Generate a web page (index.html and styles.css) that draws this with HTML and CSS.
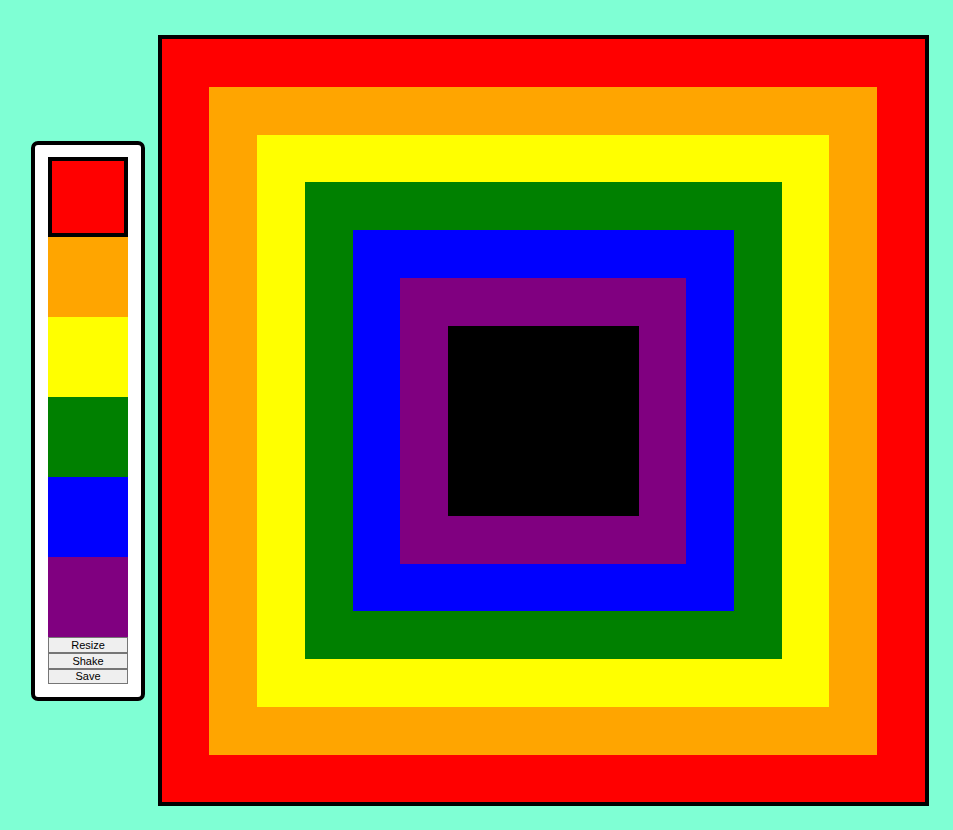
FILE: index.html
```html
<!DOCTYPE html>
<html>
<head>
<meta charset="utf-8">
<link rel="stylesheet" href="styles.css">
</head>
<body>
<div class="app">
  <div class="palette">
    <div class="swatch selected" style="background:#ff0000"></div>
    <div class="swatch" style="background:#ffa500"></div>
    <div class="swatch" style="background:#ffff00"></div>
    <div class="swatch" style="background:#008000"></div>
    <div class="swatch" style="background:#0000ff"></div>
    <div class="swatch" style="background:#800080"></div>
    <button class="btn">Resize</button>
    <button class="btn">Shake</button>
    <button class="btn last">Save</button>
  </div>
  <div class="canvas">
    <svg class="art" viewBox="0 0 763 763" width="763" height="763" shape-rendering="crispEdges">
      <rect x="0" y="0" width="763" height="763" fill="#ff0000"/>
      <rect x="47" y="48" width="668" height="668" fill="#ffa500"/>
      <rect x="95" y="96" width="572" height="572" fill="#ffff00"/>
      <rect x="143" y="143" width="477" height="477" fill="#008000"/>
      <rect x="191" y="191" width="381" height="381" fill="#0000ff"/>
      <rect x="238" y="239" width="286" height="286" fill="#800080"/>
      <rect x="286" y="287" width="191" height="190" fill="#000000"/>
    </svg>
  </div>
</div>
</body>
</html>
```
FILE: styles.css
```css
html, body {
  margin: 0;
  padding: 0;
  background: #7fffd4;
}
body {
  width: 953px;
  height: 830px;
  overflow: hidden;
}
.app {
  display: flex;
  align-items: flex-start;
  gap: 13px;
  padding: 35px 0 0 31px;
}
.palette {
  display: flex;
  flex-direction: column;
  width: 80px;
  margin-top: 106px;
  padding: 12px 13px 13px 13px;
  background: #ffffff;
  border: 4px solid #000000;
  border-radius: 7px;
}
.swatch {
  width: 80px;
  height: 80px;
  box-sizing: border-box;
}
.swatch.selected {
  border: 4px solid #000000;
}
.btn {
  display: block;
  width: 80px;
  height: 16px;
  margin: 0;
  padding: 0;
  box-sizing: border-box;
  border: 1px solid #767676;
  border-radius: 0;
  background: #efefef;
  color: #000000;
  font-family: "Liberation Sans", Arial, sans-serif;
  font-size: 11px;
  line-height: 14px;
  text-align: center;
}
.btn.last {
  height: 15px;
  line-height: 13px;
}
.canvas {
  border: 4px solid #000000;
  width: 763px;
  height: 763px;
}
.art {
  display: block;
}
```
